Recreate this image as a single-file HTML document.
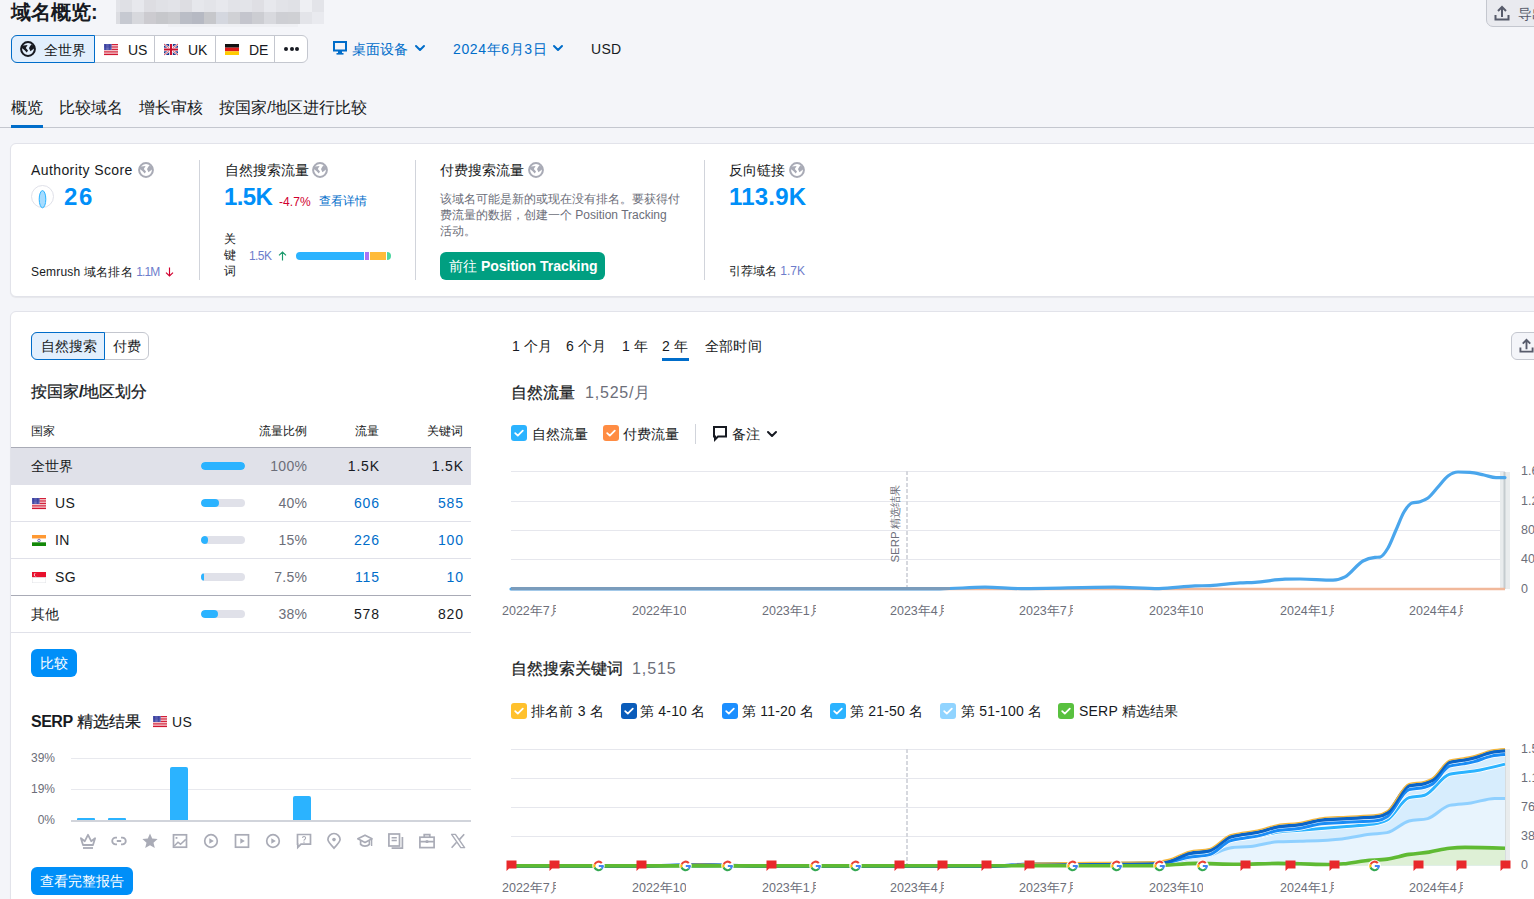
<!DOCTYPE html>
<html><head><meta charset="utf-8">
<style>
*{box-sizing:border-box;}
html,body{margin:0;padding:0;}
body{width:1534px;height:899px;overflow:hidden;background:#f4f5f9;position:relative;font-family:"Liberation Sans",sans-serif;color:#171a22;font-size:14px;}
.a{position:absolute;white-space:nowrap;}
.blk{position:absolute;}
svg{position:absolute;overflow:visible;}
</style></head><body>

<div class="a" style="left:11px;top:-1px;font-size:20px;line-height:26px;color:#171a22;font-weight:bold;">域名概览:</div>
<div class="blk" style="left:116px;top:0px;width:4px;height:12px;background:#e3e4e9"></div>
<div class="blk" style="left:116px;top:12px;width:4px;height:12px;background:#dcdde2"></div>
<div class="blk" style="left:120px;top:0px;width:12px;height:12px;background:#dfe0e5"></div>
<div class="blk" style="left:120px;top:12px;width:12px;height:12px;background:#c6c9d1"></div>
<div class="blk" style="left:132px;top:0px;width:12px;height:12px;background:#e7e8ed"></div>
<div class="blk" style="left:132px;top:12px;width:12px;height:12px;background:#d7d8dd"></div>
<div class="blk" style="left:144px;top:0px;width:12px;height:12px;background:#dddde2"></div>
<div class="blk" style="left:144px;top:12px;width:12px;height:12px;background:#cccbd0"></div>
<div class="blk" style="left:156px;top:0px;width:12px;height:12px;background:#e0e1e6"></div>
<div class="blk" style="left:156px;top:12px;width:12px;height:12px;background:#c6c7cb"></div>
<div class="blk" style="left:168px;top:0px;width:12px;height:12px;background:#e2e3e8"></div>
<div class="blk" style="left:168px;top:12px;width:12px;height:12px;background:#cacbcf"></div>
<div class="blk" style="left:180px;top:0px;width:12px;height:12px;background:#dddde2"></div>
<div class="blk" style="left:180px;top:12px;width:12px;height:12px;background:#babdc6"></div>
<div class="blk" style="left:192px;top:0px;width:12px;height:12px;background:#e6e7ec"></div>
<div class="blk" style="left:192px;top:12px;width:12px;height:12px;background:#b6b9c3"></div>
<div class="blk" style="left:204px;top:0px;width:12px;height:12px;background:#e3e4e9"></div>
<div class="blk" style="left:204px;top:12px;width:12px;height:12px;background:#c6c7cb"></div>
<div class="blk" style="left:216px;top:0px;width:12px;height:12px;background:#e7e8ed"></div>
<div class="blk" style="left:216px;top:12px;width:12px;height:12px;background:#d4d7df"></div>
<div class="blk" style="left:228px;top:0px;width:12px;height:12px;background:#e2e3e8"></div>
<div class="blk" style="left:228px;top:12px;width:12px;height:12px;background:#d0d1d5"></div>
<div class="blk" style="left:240px;top:0px;width:12px;height:12px;background:#e3e4e9"></div>
<div class="blk" style="left:240px;top:12px;width:12px;height:12px;background:#c4c5cd"></div>
<div class="blk" style="left:252px;top:0px;width:12px;height:12px;background:#dfdfe4"></div>
<div class="blk" style="left:252px;top:12px;width:12px;height:12px;background:#cccdd2"></div>
<div class="blk" style="left:264px;top:0px;width:12px;height:12px;background:#e7e8ed"></div>
<div class="blk" style="left:264px;top:12px;width:12px;height:12px;background:#d8d9de"></div>
<div class="blk" style="left:276px;top:0px;width:12px;height:12px;background:#e2e3e8"></div>
<div class="blk" style="left:276px;top:12px;width:12px;height:12px;background:#cecfd4"></div>
<div class="blk" style="left:288px;top:0px;width:12px;height:12px;background:#e0e1e6"></div>
<div class="blk" style="left:288px;top:12px;width:12px;height:12px;background:#cfd0d4"></div>
<div class="blk" style="left:300px;top:0px;width:12px;height:12px;background:#eeeff3"></div>
<div class="blk" style="left:300px;top:12px;width:12px;height:12px;background:#e3e4e9"></div>
<div class="blk" style="left:312px;top:0px;width:12px;height:12px;background:#e3e4e9"></div>
<div class="blk" style="left:312px;top:12px;width:12px;height:12px;background:#e9eaef"></div>
<div class="blk" style="left:168px;top:24px;width:130px;height:3px;background:#eff0f4"></div>
<div class="blk" style="left:1486px;top:-8px;width:90px;height:35px;background:#e9eaef;border:1px solid #c4c7cf;border-radius:7px;"></div>
<svg style="left:1494px;top:5px" width="16" height="16" viewBox="0 0 16 16"><path d="M8 12 V2.5 M4 6 L8 2 L12 6" fill="none" stroke="#575b6b" stroke-width="2" stroke-linejoin="miter"/><path d="M1.5 10 V14.5 H14.5 V10" fill="none" stroke="#575b6b" stroke-width="2"/></svg>
<div class="a" style="left:1518px;top:4px;font-size:14px;line-height:20px;color:#575b6b;font-weight:normal;">导出</div>
<div class="blk" style="left:11px;top:35px;width:297px;height:28px;border:1px solid #c4c7cf;border-radius:6px;background:#fff;"></div>
<div class="blk" style="left:154px;top:36px;width:1px;height:26px;background:#c4c7cf"></div>
<div class="blk" style="left:215px;top:36px;width:1px;height:26px;background:#c4c7cf"></div>
<div class="blk" style="left:274px;top:36px;width:1px;height:26px;background:#c4c7cf"></div>
<div class="blk" style="left:11px;top:35px;width:84px;height:28px;border:1px solid #006dca;border-radius:6px 0 0 6px;background:#e2effd;"></div>
<svg style="left:20px;top:41px" width="16" height="16" viewBox="0 0 16 16"><circle cx="8" cy="8" r="6.9" fill="none" stroke="#171a22" stroke-width="2"/><path d="M1.2 4.8 L7.6 4.1 L5.8 7 L8 9.6 L6.8 11.6 L4.4 8.9 L1.8 6.9 Z" fill="#171a22"/><path d="M11.4 3.3 L14.4 5.6 L14 7.4 L10.4 10.2 L9 7 L10.2 5.1 Z" fill="#171a22"/></svg>
<div class="a" style="left:44px;top:40px;font-size:14px;line-height:20px;color:#171a22;font-weight:normal;">全世界</div>
<svg style="left:104px;top:44px" width="14" height="11" viewBox="0 0 14 11"><rect width="14" height="11" fill="#fff"/><rect x="0" y="0.00" width="14" height="0.95" fill="#d0142e"/><rect x="0" y="1.69" width="14" height="0.95" fill="#d0142e"/><rect x="0" y="3.38" width="14" height="0.95" fill="#d0142e"/><rect x="0" y="5.07" width="14" height="0.95" fill="#d0142e"/><rect x="0" y="6.76" width="14" height="0.95" fill="#d0142e"/><rect x="0" y="8.45" width="14" height="0.95" fill="#d0142e"/><rect x="0" y="10.14" width="14" height="0.95" fill="#d0142e"/><rect x="0" y="10.1" width="14" height="0.9" fill="#d0142e"/><rect x="0" y="0" width="7.6" height="6" fill="#2f3599"/><circle cx="0.90" cy="0.80" r="0.38" fill="#c9ccf0"/><circle cx="2.20" cy="0.80" r="0.38" fill="#c9ccf0"/><circle cx="3.50" cy="0.80" r="0.38" fill="#c9ccf0"/><circle cx="4.80" cy="0.80" r="0.38" fill="#c9ccf0"/><circle cx="6.10" cy="0.80" r="0.38" fill="#c9ccf0"/><circle cx="7.40" cy="0.80" r="0.38" fill="#c9ccf0"/><circle cx="0.90" cy="1.95" r="0.38" fill="#c9ccf0"/><circle cx="2.20" cy="1.95" r="0.38" fill="#c9ccf0"/><circle cx="3.50" cy="1.95" r="0.38" fill="#c9ccf0"/><circle cx="4.80" cy="1.95" r="0.38" fill="#c9ccf0"/><circle cx="6.10" cy="1.95" r="0.38" fill="#c9ccf0"/><circle cx="7.40" cy="1.95" r="0.38" fill="#c9ccf0"/><circle cx="0.90" cy="3.10" r="0.38" fill="#c9ccf0"/><circle cx="2.20" cy="3.10" r="0.38" fill="#c9ccf0"/><circle cx="3.50" cy="3.10" r="0.38" fill="#c9ccf0"/><circle cx="4.80" cy="3.10" r="0.38" fill="#c9ccf0"/><circle cx="6.10" cy="3.10" r="0.38" fill="#c9ccf0"/><circle cx="7.40" cy="3.10" r="0.38" fill="#c9ccf0"/><circle cx="0.90" cy="4.25" r="0.38" fill="#c9ccf0"/><circle cx="2.20" cy="4.25" r="0.38" fill="#c9ccf0"/><circle cx="3.50" cy="4.25" r="0.38" fill="#c9ccf0"/><circle cx="4.80" cy="4.25" r="0.38" fill="#c9ccf0"/><circle cx="6.10" cy="4.25" r="0.38" fill="#c9ccf0"/><circle cx="7.40" cy="4.25" r="0.38" fill="#c9ccf0"/><circle cx="0.90" cy="5.40" r="0.38" fill="#c9ccf0"/><circle cx="2.20" cy="5.40" r="0.38" fill="#c9ccf0"/><circle cx="3.50" cy="5.40" r="0.38" fill="#c9ccf0"/><circle cx="4.80" cy="5.40" r="0.38" fill="#c9ccf0"/><circle cx="6.10" cy="5.40" r="0.38" fill="#c9ccf0"/><circle cx="7.40" cy="5.40" r="0.38" fill="#c9ccf0"/></svg>
<div class="a" style="left:128px;top:40px;font-size:14px;line-height:20px;color:#171a22;font-weight:normal;">US</div>
<svg style="left:164px;top:44px" width="14" height="11" viewBox="0 0 14 11"><rect width="14" height="11" fill="#1f3c8f"/><path d="M0 0 L14 11 M14 0 L0 11" stroke="#fff" stroke-width="2.2"/><path d="M0 0 L14 11 M14 0 L0 11" stroke="#c8102e" stroke-width="0.8"/><rect x="5.2" y="0" width="3.6" height="11" fill="#fff"/><rect x="0" y="3.7" width="14" height="3.6" fill="#fff"/><rect x="6" y="0" width="2" height="11" fill="#c8102e"/><rect x="0" y="4.5" width="14" height="2" fill="#c8102e"/></svg>
<div class="a" style="left:188px;top:40px;font-size:14px;line-height:20px;color:#171a22;font-weight:normal;">UK</div>
<svg style="left:225px;top:44px" width="14" height="11" viewBox="0 0 14 11"><rect width="14" height="3.67" fill="#111"/><rect y="3.67" width="14" height="3.67" fill="#dd1c1c"/><rect y="7.33" width="14" height="3.67" fill="#ffcc00"/></svg>
<div class="a" style="left:249px;top:40px;font-size:14px;line-height:20px;color:#171a22;font-weight:normal;">DE</div>
<div class="blk" style="left:284.0px;top:46.5px;width:4px;height:4px;background:#171a22;border-radius:50%"></div>
<div class="blk" style="left:289.6px;top:46.5px;width:4px;height:4px;background:#171a22;border-radius:50%"></div>
<div class="blk" style="left:295.2px;top:46.5px;width:4px;height:4px;background:#171a22;border-radius:50%"></div>
<svg style="left:333px;top:41px" width="14" height="14" viewBox="0 0 14 14"><rect x="1" y="1" width="12" height="8.5" fill="none" stroke="#006dca" stroke-width="2"/><rect x="5" y="10" width="4" height="2" fill="#006dca"/><rect x="3.5" y="12" width="7" height="1.6" fill="#006dca"/></svg>
<div class="a" style="left:352px;top:39px;font-size:14px;line-height:20px;color:#006dca;font-weight:normal;">桌面设备</div>
<svg style="left:415px;top:45px" width="10" height="6" viewBox="0 0 10 6"><path d="M1 1 L5 5 L9 1" fill="none" stroke="#006dca" stroke-width="2" stroke-linecap="round" stroke-linejoin="round"/></svg>
<div class="a" style="left:453px;top:39px;font-size:14px;line-height:20px;color:#006dca;font-weight:normal;letter-spacing:0.6px">2024年6月3日</div>
<svg style="left:553px;top:45px" width="10" height="6" viewBox="0 0 10 6"><path d="M1 1 L5 5 L9 1" fill="none" stroke="#006dca" stroke-width="2" stroke-linecap="round" stroke-linejoin="round"/></svg>
<div class="a" style="left:591px;top:39px;font-size:14px;line-height:20px;color:#171a22;font-weight:normal;letter-spacing:0.3px">USD</div>
<div class="blk" style="left:0px;top:127px;width:1534px;height:1px;background:#c4c7cf"></div>
<div class="a" style="left:11px;top:97px;font-size:16px;line-height:22px;color:#171a22;font-weight:normal;">概览</div>
<div class="blk" style="left:11px;top:125px;width:32px;height:3px;background:#006dca"></div>
<div class="a" style="left:59px;top:97px;font-size:16px;line-height:22px;color:#171a22;font-weight:normal;">比较域名</div>
<div class="a" style="left:139px;top:97px;font-size:16px;line-height:22px;color:#171a22;font-weight:normal;">增长审核</div>
<div class="a" style="left:219px;top:97px;font-size:16px;line-height:22px;color:#171a22;font-weight:normal;">按国家/地区进行比较</div>
<div class="blk" style="left:10px;top:143px;width:1541px;height:154px;background:#fff;border:1px solid #e2e3ea;border-radius:6px;box-shadow:0 1px 1px rgba(0,0,0,.06)"></div>
<div class="blk" style="left:199px;top:160px;width:1px;height:120px;background:#d1d4db"></div>
<div class="blk" style="left:415px;top:160px;width:1px;height:120px;background:#d1d4db"></div>
<div class="blk" style="left:704px;top:160px;width:1px;height:120px;background:#d1d4db"></div>
<div class="a" style="left:31px;top:160px;font-size:14px;line-height:20px;color:#171a22;font-weight:normal;letter-spacing:0.4px">Authority Score</div>
<svg style="left:138px;top:162px" width="16" height="16" viewBox="0 0 16 16"><circle cx="8" cy="8" r="6.9" fill="none" stroke="#a9abb6" stroke-width="2"/><path d="M1.2 4.8 L7.6 4.1 L5.8 7 L8 9.6 L6.8 11.6 L4.4 8.9 L1.8 6.9 Z" fill="#a9abb6"/><path d="M11.4 3.3 L14.4 5.6 L14 7.4 L10.4 10.2 L9 7 L10.2 5.1 Z" fill="#a9abb6"/></svg>
<svg style="left:31px;top:185px" width="24" height="24" viewBox="0 0 24 24"><circle cx="11.5" cy="11.5" r="11" fill="none" stroke="#e0e1e9" stroke-width="1"/><ellipse cx="11.5" cy="14.2" rx="3.3" ry="8.6" fill="#a6dcff" stroke="#2bb3ff" stroke-width="1"/></svg>
<div class="a" style="left:64px;top:182px;font-size:24px;line-height:30px;color:#008ff8;font-weight:bold;letter-spacing:1.6px">26</div>
<div class="a" style="left:31px;top:262px;font-size:12px;line-height:20px;color:#171a22;font-weight:normal;letter-spacing:0.2px">Semrush 域名排名 <span style="color:#6d7ccb;letter-spacing:-0.9px">1.1M</span></div>
<svg style="left:165px;top:267px" width="9" height="10" viewBox="0 0 9 10"><path d="M4.5 0.5 V9 M1 5.6 L4.5 9 L8 5.6" fill="none" stroke="#d1002f" stroke-width="1.15"/></svg>
<div class="a" style="left:225px;top:160px;font-size:14px;line-height:20px;color:#171a22;font-weight:normal;">自然搜索流量</div>
<svg style="left:312px;top:162px" width="16" height="16" viewBox="0 0 16 16"><circle cx="8" cy="8" r="6.9" fill="none" stroke="#a9abb6" stroke-width="2"/><path d="M1.2 4.8 L7.6 4.1 L5.8 7 L8 9.6 L6.8 11.6 L4.4 8.9 L1.8 6.9 Z" fill="#a9abb6"/><path d="M11.4 3.3 L14.4 5.6 L14 7.4 L10.4 10.2 L9 7 L10.2 5.1 Z" fill="#a9abb6"/></svg>
<div class="a" style="left:224px;top:182px;font-size:24px;line-height:30px;color:#008ff8;font-weight:bold;letter-spacing:-0.6px">1.5K</div>
<div class="a" style="left:279px;top:192px;font-size:12px;line-height:20px;color:#d1002f;font-weight:normal;letter-spacing:0.1px">-4.7%</div>
<div class="a" style="left:319px;top:191px;font-size:12px;line-height:20px;color:#006dca;font-weight:normal;">查看详情</div>
<div class="a" style="left:224px;top:231px;font-size:12px;line-height:16px;white-space:normal;width:14px;">关<br>键<br>词</div>
<div class="a" style="left:249px;top:246px;font-size:12px;line-height:20px;color:#6d7ccb;font-weight:normal;letter-spacing:-0.6px">1.5K</div>
<svg style="left:278px;top:251px" width="9" height="10" viewBox="0 0 9 10"><path d="M4.5 9.5 V1 M1 4.4 L4.5 1 L8 4.4" fill="none" stroke="#1b9a6c" stroke-width="1.15"/></svg>
<div class="blk" style="left:296px;top:252px;width:95px;height:8px;border-radius:4px;overflow:hidden;background:#fff"><div class="blk" style="left:0;top:0;width:68px;height:8px;background:#2bb3ff"></div><div class="blk" style="left:69px;top:0;width:4px;height:8px;background:#a972f6"></div><div class="blk" style="left:74px;top:0;width:16px;height:8px;background:#ffbb3a"></div><div class="blk" style="left:91px;top:0;width:4px;height:8px;background:#4ed6a0"></div></div>
<div class="a" style="left:440px;top:160px;font-size:14px;line-height:20px;color:#171a22;font-weight:normal;">付费搜索流量</div>
<svg style="left:528px;top:162px" width="16" height="16" viewBox="0 0 16 16"><circle cx="8" cy="8" r="6.9" fill="none" stroke="#a9abb6" stroke-width="2"/><path d="M1.2 4.8 L7.6 4.1 L5.8 7 L8 9.6 L6.8 11.6 L4.4 8.9 L1.8 6.9 Z" fill="#a9abb6"/><path d="M11.4 3.3 L14.4 5.6 L14 7.4 L10.4 10.2 L9 7 L10.2 5.1 Z" fill="#a9abb6"/></svg>
<div class="a" style="left:440px;top:191px;width:245px;font-size:12px;line-height:16px;color:#6c6e79;white-space:normal;">该域名可能是新的或现在没有排名。要获得付<br>费流量的数据，创建一个 Position Tracking<br>活动。</div>
<div class="blk" style="left:440px;top:252px;width:165px;height:28px;background:#009f81;border-radius:6px"></div>
<div class="a" style="left:449px;top:256px;font-size:14px;line-height:20px;color:#fff;font-weight:bold;"><span style="font-weight:500">前往</span> Position Tracking</div>
<div class="a" style="left:729px;top:160px;font-size:14px;line-height:20px;color:#171a22;font-weight:normal;">反向链接</div>
<svg style="left:789px;top:162px" width="16" height="16" viewBox="0 0 16 16"><circle cx="8" cy="8" r="6.9" fill="none" stroke="#a9abb6" stroke-width="2"/><path d="M1.2 4.8 L7.6 4.1 L5.8 7 L8 9.6 L6.8 11.6 L4.4 8.9 L1.8 6.9 Z" fill="#a9abb6"/><path d="M11.4 3.3 L14.4 5.6 L14 7.4 L10.4 10.2 L9 7 L10.2 5.1 Z" fill="#a9abb6"/></svg>
<div class="a" style="left:729px;top:182px;font-size:24px;line-height:30px;color:#008ff8;font-weight:bold;letter-spacing:0.2px">113.9K</div>
<div class="a" style="left:729px;top:261px;font-size:12px;line-height:20px;color:#171a22;font-weight:normal;">引荐域名 <span style="color:#6d7ccb">1.7K</span></div>
<div class="blk" style="left:10px;top:311px;width:1541px;height:640px;background:#fff;border:1px solid #e2e3ea;border-radius:6px;box-shadow:0 1px 1px rgba(0,0,0,.06)"></div>
<div class="blk" style="left:31px;top:332px;width:118px;height:28px;border:1px solid #c4c7cf;border-radius:6px;background:#fff"></div>
<div class="blk" style="left:31px;top:332px;width:74px;height:28px;border:1px solid #006dca;border-radius:6px 0 0 6px;background:#e2effd"></div>
<div class="a" style="left:41px;top:336px;font-size:14px;line-height:20px;color:#171a22;font-weight:normal;">自然搜索</div>
<div class="a" style="left:113px;top:336px;font-size:14px;line-height:20px;color:#171a22;font-weight:normal;">付费</div>
<div class="a" style="left:31px;top:381px;font-size:16px;line-height:22px;color:#171a22;font-weight:500;-webkit-text-stroke:0.25px #171a22">按国家<span style="font-weight:bold">/</span>地区划分</div>
<div class="a" style="left:31px;top:421px;font-size:12px;line-height:20px;color:#171a22;font-weight:normal;">国家</div>
<div class="a" style="right:1227px;top:421px;font-size:12px;line-height:20px;color:#171a22;font-weight:normal;text-align:right;">流量比例</div>
<div class="a" style="right:1155px;top:421px;font-size:12px;line-height:20px;color:#171a22;font-weight:normal;text-align:right;">流量</div>
<div class="a" style="right:1071px;top:421px;font-size:12px;line-height:20px;color:#171a22;font-weight:normal;text-align:right;">关键词</div>
<div class="blk" style="left:11px;top:448px;width:460px;height:36px;background:#e0e1e9"></div>
<div class="blk" style="left:11px;top:447px;width:460px;height:1px;background:#a9abb6"></div>
<div class="a" style="left:31px;top:456px;font-size:14px;line-height:20px;color:#171a22;font-weight:normal;">全世界</div>
<div class="blk" style="left:201px;top:462px;width:44px;height:8px;border-radius:4px;background:#e0e1e9;overflow:hidden"><div class="blk" style="left:0;top:0;width:44.0px;height:8px;border-radius:4px;background:#2bb3ff"></div></div>
<div class="a" style="right:1227px;top:456px;font-size:14px;line-height:20px;color:#6c6e79;font-weight:normal;text-align:right;letter-spacing:0.3px;margin-right:-0.3px">100%</div>
<div class="a" style="right:1155px;top:456px;font-size:14px;line-height:20px;color:#171a22;font-weight:normal;text-align:right;letter-spacing:0.8px;margin-right:-0.8px">1.5K</div>
<div class="a" style="right:1071px;top:456px;font-size:14px;line-height:20px;color:#171a22;font-weight:normal;text-align:right;letter-spacing:0.8px;margin-right:-0.8px">1.5K</div>
<div class="blk" style="left:11px;top:484px;width:460px;height:1px;background:#e0e1e9"></div>
<svg style="left:32px;top:498px" width="14" height="11" viewBox="0 0 14 11"><rect width="14" height="11" fill="#fff"/><rect x="0" y="0.00" width="14" height="0.95" fill="#d0142e"/><rect x="0" y="1.69" width="14" height="0.95" fill="#d0142e"/><rect x="0" y="3.38" width="14" height="0.95" fill="#d0142e"/><rect x="0" y="5.07" width="14" height="0.95" fill="#d0142e"/><rect x="0" y="6.76" width="14" height="0.95" fill="#d0142e"/><rect x="0" y="8.45" width="14" height="0.95" fill="#d0142e"/><rect x="0" y="10.14" width="14" height="0.95" fill="#d0142e"/><rect x="0" y="10.1" width="14" height="0.9" fill="#d0142e"/><rect x="0" y="0" width="7.6" height="6" fill="#2f3599"/><circle cx="0.90" cy="0.80" r="0.38" fill="#c9ccf0"/><circle cx="2.20" cy="0.80" r="0.38" fill="#c9ccf0"/><circle cx="3.50" cy="0.80" r="0.38" fill="#c9ccf0"/><circle cx="4.80" cy="0.80" r="0.38" fill="#c9ccf0"/><circle cx="6.10" cy="0.80" r="0.38" fill="#c9ccf0"/><circle cx="7.40" cy="0.80" r="0.38" fill="#c9ccf0"/><circle cx="0.90" cy="1.95" r="0.38" fill="#c9ccf0"/><circle cx="2.20" cy="1.95" r="0.38" fill="#c9ccf0"/><circle cx="3.50" cy="1.95" r="0.38" fill="#c9ccf0"/><circle cx="4.80" cy="1.95" r="0.38" fill="#c9ccf0"/><circle cx="6.10" cy="1.95" r="0.38" fill="#c9ccf0"/><circle cx="7.40" cy="1.95" r="0.38" fill="#c9ccf0"/><circle cx="0.90" cy="3.10" r="0.38" fill="#c9ccf0"/><circle cx="2.20" cy="3.10" r="0.38" fill="#c9ccf0"/><circle cx="3.50" cy="3.10" r="0.38" fill="#c9ccf0"/><circle cx="4.80" cy="3.10" r="0.38" fill="#c9ccf0"/><circle cx="6.10" cy="3.10" r="0.38" fill="#c9ccf0"/><circle cx="7.40" cy="3.10" r="0.38" fill="#c9ccf0"/><circle cx="0.90" cy="4.25" r="0.38" fill="#c9ccf0"/><circle cx="2.20" cy="4.25" r="0.38" fill="#c9ccf0"/><circle cx="3.50" cy="4.25" r="0.38" fill="#c9ccf0"/><circle cx="4.80" cy="4.25" r="0.38" fill="#c9ccf0"/><circle cx="6.10" cy="4.25" r="0.38" fill="#c9ccf0"/><circle cx="7.40" cy="4.25" r="0.38" fill="#c9ccf0"/><circle cx="0.90" cy="5.40" r="0.38" fill="#c9ccf0"/><circle cx="2.20" cy="5.40" r="0.38" fill="#c9ccf0"/><circle cx="3.50" cy="5.40" r="0.38" fill="#c9ccf0"/><circle cx="4.80" cy="5.40" r="0.38" fill="#c9ccf0"/><circle cx="6.10" cy="5.40" r="0.38" fill="#c9ccf0"/><circle cx="7.40" cy="5.40" r="0.38" fill="#c9ccf0"/></svg>
<div class="a" style="left:55px;top:493px;font-size:14px;line-height:20px;color:#171a22;font-weight:normal;letter-spacing:0.3px">US</div>
<div class="blk" style="left:201px;top:499px;width:44px;height:8px;border-radius:4px;background:#e0e1e9;overflow:hidden"><div class="blk" style="left:0;top:0;width:17.6px;height:8px;border-radius:4px;background:#2bb3ff"></div></div>
<div class="a" style="right:1227px;top:493px;font-size:14px;line-height:20px;color:#6c6e79;font-weight:normal;text-align:right;letter-spacing:0.3px;margin-right:-0.3px">40%</div>
<div class="a" style="right:1155px;top:493px;font-size:14px;line-height:20px;color:#006dca;font-weight:normal;text-align:right;letter-spacing:0.8px;margin-right:-0.8px">606</div>
<div class="a" style="right:1071px;top:493px;font-size:14px;line-height:20px;color:#006dca;font-weight:normal;text-align:right;letter-spacing:0.8px;margin-right:-0.8px">585</div>
<div class="blk" style="left:11px;top:521px;width:460px;height:1px;background:#e0e1e9"></div>
<svg style="left:32px;top:535px" width="14" height="11" viewBox="0 0 14 11"><rect width="14" height="3.67" fill="#ff9933"/><rect y="3.67" width="14" height="3.67" fill="#fff"/><rect y="7.33" width="14" height="3.67" fill="#138808"/><circle cx="7" cy="5.5" r="1.3" fill="none" stroke="#000080" stroke-width="0.5"/></svg>
<div class="a" style="left:55px;top:530px;font-size:14px;line-height:20px;color:#171a22;font-weight:normal;letter-spacing:0.3px">IN</div>
<div class="blk" style="left:201px;top:536px;width:44px;height:8px;border-radius:4px;background:#e0e1e9;overflow:hidden"><div class="blk" style="left:0;top:0;width:6.6px;height:8px;border-radius:4px;background:#2bb3ff"></div></div>
<div class="a" style="right:1227px;top:530px;font-size:14px;line-height:20px;color:#6c6e79;font-weight:normal;text-align:right;letter-spacing:0.3px;margin-right:-0.3px">15%</div>
<div class="a" style="right:1155px;top:530px;font-size:14px;line-height:20px;color:#006dca;font-weight:normal;text-align:right;letter-spacing:0.8px;margin-right:-0.8px">226</div>
<div class="a" style="right:1071px;top:530px;font-size:14px;line-height:20px;color:#006dca;font-weight:normal;text-align:right;letter-spacing:0.8px;margin-right:-0.8px">100</div>
<div class="blk" style="left:11px;top:558px;width:460px;height:1px;background:#e0e1e9"></div>
<svg style="left:32px;top:572px" width="14" height="11" viewBox="0 0 14 11"><rect width="14" height="5.5" fill="#e8112d"/><rect y="5.5" width="14" height="5.5" fill="#fff"/><rect x="0.25" y="5.5" width="13.5" height="5.25" fill="none" stroke="#e1e2e6" stroke-width="0.5"/><circle cx="3.6" cy="2.8" r="1.8" fill="#fff"/><circle cx="4.3" cy="2.8" r="1.7" fill="#e8112d"/></svg>
<div class="a" style="left:55px;top:567px;font-size:14px;line-height:20px;color:#171a22;font-weight:normal;letter-spacing:0.3px">SG</div>
<div class="blk" style="left:201px;top:573px;width:44px;height:8px;border-radius:4px;background:#e0e1e9;overflow:hidden"><div class="blk" style="left:0;top:0;width:3.3px;height:8px;border-radius:4px;background:#2bb3ff"></div></div>
<div class="a" style="right:1227px;top:567px;font-size:14px;line-height:20px;color:#6c6e79;font-weight:normal;text-align:right;letter-spacing:0.3px;margin-right:-0.3px">7.5%</div>
<div class="a" style="right:1155px;top:567px;font-size:14px;line-height:20px;color:#006dca;font-weight:normal;text-align:right;letter-spacing:0.8px;margin-right:-0.8px">115</div>
<div class="a" style="right:1071px;top:567px;font-size:14px;line-height:20px;color:#006dca;font-weight:normal;text-align:right;letter-spacing:0.8px;margin-right:-0.8px">10</div>
<div class="blk" style="left:11px;top:595px;width:460px;height:1px;background:#a9abb6"></div>
<div class="a" style="left:31px;top:604px;font-size:14px;line-height:20px;color:#171a22;font-weight:normal;">其他</div>
<div class="blk" style="left:201px;top:610px;width:44px;height:8px;border-radius:4px;background:#e0e1e9;overflow:hidden"><div class="blk" style="left:0;top:0;width:16.7px;height:8px;border-radius:4px;background:#2bb3ff"></div></div>
<div class="a" style="right:1227px;top:604px;font-size:14px;line-height:20px;color:#6c6e79;font-weight:normal;text-align:right;letter-spacing:0.3px;margin-right:-0.3px">38%</div>
<div class="a" style="right:1155px;top:604px;font-size:14px;line-height:20px;color:#171a22;font-weight:normal;text-align:right;letter-spacing:0.8px;margin-right:-0.8px">578</div>
<div class="a" style="right:1071px;top:604px;font-size:14px;line-height:20px;color:#171a22;font-weight:normal;text-align:right;letter-spacing:0.8px;margin-right:-0.8px">820</div>
<div class="blk" style="left:11px;top:632px;width:460px;height:1px;background:#e0e1e9"></div>
<div class="blk" style="left:31px;top:649px;width:46px;height:28px;background:#008ff8;border-radius:6px"></div>
<div class="a" style="left:40px;top:653px;font-size:14px;line-height:20px;color:#fff;font-weight:500;">比较</div>
<div class="a" style="left:31px;top:711px;font-size:16px;line-height:22px;color:#171a22;font-weight:500;"><span style="font-weight:bold;letter-spacing:-0.5px">SERP</span> <span style="-webkit-text-stroke:0.25px #171a22">精选结果</span></div>
<svg style="left:153px;top:716px" width="14" height="11" viewBox="0 0 14 11"><rect width="14" height="11" fill="#fff"/><rect x="0" y="0.00" width="14" height="0.95" fill="#d0142e"/><rect x="0" y="1.69" width="14" height="0.95" fill="#d0142e"/><rect x="0" y="3.38" width="14" height="0.95" fill="#d0142e"/><rect x="0" y="5.07" width="14" height="0.95" fill="#d0142e"/><rect x="0" y="6.76" width="14" height="0.95" fill="#d0142e"/><rect x="0" y="8.45" width="14" height="0.95" fill="#d0142e"/><rect x="0" y="10.14" width="14" height="0.95" fill="#d0142e"/><rect x="0" y="10.1" width="14" height="0.9" fill="#d0142e"/><rect x="0" y="0" width="7.6" height="6" fill="#2f3599"/><circle cx="0.90" cy="0.80" r="0.38" fill="#c9ccf0"/><circle cx="2.20" cy="0.80" r="0.38" fill="#c9ccf0"/><circle cx="3.50" cy="0.80" r="0.38" fill="#c9ccf0"/><circle cx="4.80" cy="0.80" r="0.38" fill="#c9ccf0"/><circle cx="6.10" cy="0.80" r="0.38" fill="#c9ccf0"/><circle cx="7.40" cy="0.80" r="0.38" fill="#c9ccf0"/><circle cx="0.90" cy="1.95" r="0.38" fill="#c9ccf0"/><circle cx="2.20" cy="1.95" r="0.38" fill="#c9ccf0"/><circle cx="3.50" cy="1.95" r="0.38" fill="#c9ccf0"/><circle cx="4.80" cy="1.95" r="0.38" fill="#c9ccf0"/><circle cx="6.10" cy="1.95" r="0.38" fill="#c9ccf0"/><circle cx="7.40" cy="1.95" r="0.38" fill="#c9ccf0"/><circle cx="0.90" cy="3.10" r="0.38" fill="#c9ccf0"/><circle cx="2.20" cy="3.10" r="0.38" fill="#c9ccf0"/><circle cx="3.50" cy="3.10" r="0.38" fill="#c9ccf0"/><circle cx="4.80" cy="3.10" r="0.38" fill="#c9ccf0"/><circle cx="6.10" cy="3.10" r="0.38" fill="#c9ccf0"/><circle cx="7.40" cy="3.10" r="0.38" fill="#c9ccf0"/><circle cx="0.90" cy="4.25" r="0.38" fill="#c9ccf0"/><circle cx="2.20" cy="4.25" r="0.38" fill="#c9ccf0"/><circle cx="3.50" cy="4.25" r="0.38" fill="#c9ccf0"/><circle cx="4.80" cy="4.25" r="0.38" fill="#c9ccf0"/><circle cx="6.10" cy="4.25" r="0.38" fill="#c9ccf0"/><circle cx="7.40" cy="4.25" r="0.38" fill="#c9ccf0"/><circle cx="0.90" cy="5.40" r="0.38" fill="#c9ccf0"/><circle cx="2.20" cy="5.40" r="0.38" fill="#c9ccf0"/><circle cx="3.50" cy="5.40" r="0.38" fill="#c9ccf0"/><circle cx="4.80" cy="5.40" r="0.38" fill="#c9ccf0"/><circle cx="6.10" cy="5.40" r="0.38" fill="#c9ccf0"/><circle cx="7.40" cy="5.40" r="0.38" fill="#c9ccf0"/></svg>
<div class="a" style="left:172px;top:711px;font-size:14px;line-height:22px;color:#171a22;font-weight:normal;letter-spacing:0.3px">US</div>
<div class="a" style="right:1479px;top:748px;font-size:12px;line-height:20px;color:#6c6e79;font-weight:normal;text-align:right;">39%</div>
<div class="a" style="right:1479px;top:779px;font-size:12px;line-height:20px;color:#6c6e79;font-weight:normal;text-align:right;">19%</div>
<div class="a" style="right:1479px;top:810px;font-size:12px;line-height:20px;color:#6c6e79;font-weight:normal;text-align:right;">0%</div>
<div class="blk" style="left:71px;top:758px;width:400px;height:1px;background:#e8e9ee"></div>
<div class="blk" style="left:71px;top:789px;width:400px;height:1px;background:#e8e9ee"></div>
<div class="blk" style="left:71px;top:820px;width:400px;height:2px;background:#d1d4db"></div>
<div class="blk" style="left:77px;top:818px;width:18px;height:2px;background:#2bb3ff;border-radius:1px 1px 0 0"></div>
<div class="blk" style="left:108px;top:818px;width:18px;height:2px;background:#2bb3ff;border-radius:1px 1px 0 0"></div>
<div class="blk" style="left:170px;top:767px;width:18px;height:53px;background:#2bb3ff;border-radius:2px 2px 0 0"></div>
<div class="blk" style="left:293px;top:796px;width:18px;height:24px;background:#2bb3ff;border-radius:2px 2px 0 0"></div>
<svg style="left:80.0px;top:833px" width="16" height="16" viewBox="0 0 16 16"><path d="M0.9 5.2 L4.8 8.2 L8 1.8 L11.2 8.2 L15.1 5.2 L13 12 H3 Z" fill="none" stroke="#a9abb6" stroke-width="1.8" stroke-linejoin="round"/><path d="M3 15 H13" stroke="#a9abb6" stroke-width="1.8"/></svg>
<svg style="left:110.8px;top:833px" width="16" height="16" viewBox="0 0 16 16"><path d="M6 4.6 H4.6 A3.4 3.4 0 0 0 4.6 11.4 H6 M10 4.6 H11.4 A3.4 3.4 0 0 1 11.4 11.4 H10 M5.8 8 H10.2" fill="none" stroke="#a9abb6" stroke-width="1.8"/></svg>
<svg style="left:141.6px;top:833px" width="16" height="16" viewBox="0 0 16 16"><path d="M8 0.6 L10.2 5.6 L15.6 6.1 L11.5 9.7 L12.8 15.1 L8 12.3 L3.2 15.1 L4.5 9.7 L0.4 6.1 L5.8 5.6 Z" fill="#a9abb6"/></svg>
<svg style="left:172.4px;top:833px" width="16" height="16" viewBox="0 0 16 16"><rect x="1.5" y="1.8" width="13" height="12.4" fill="none" stroke="#a9abb6" stroke-width="1.7"/><path d="M2.2 13 L6 9.2 L8.5 11.2 L13.8 6.4" fill="none" stroke="#a9abb6" stroke-width="1.5"/><rect x="3.6" y="4" width="1.8" height="1.8" fill="#a9abb6"/></svg>
<svg style="left:203.2px;top:833px" width="16" height="16" viewBox="0 0 16 16"><circle cx="8" cy="8" r="6.3" fill="none" stroke="#a9abb6" stroke-width="1.7"/><path d="M6.3 5.2 L10.8 8 L6.3 10.8 Z" fill="#a9abb6"/></svg>
<svg style="left:234.0px;top:833px" width="16" height="16" viewBox="0 0 16 16"><rect x="1.5" y="1.8" width="13" height="12.4" fill="none" stroke="#a9abb6" stroke-width="1.7"/><path d="M6.3 5.2 L10.8 8 L6.3 10.8 Z" fill="#a9abb6"/></svg>
<svg style="left:264.8px;top:833px" width="16" height="16" viewBox="0 0 16 16"><circle cx="8" cy="8" r="6.3" fill="none" stroke="#a9abb6" stroke-width="1.7"/><path d="M6.3 5.2 L10.8 8 L6.3 10.8 Z" fill="#a9abb6"/></svg>
<svg style="left:295.6px;top:833px" width="16" height="16" viewBox="0 0 16 16"><path d="M1.5 1.5 H14.5 V11.2 H5 L1.8 14.4 V11.2 H1.5 Z" fill="none" stroke="#a9abb6" stroke-width="1.7" stroke-linejoin="miter"/><path d="M6.6 5 A1.5 1.5 0 1 1 8.6 6.4 Q8 6.8 8 7.8" fill="none" stroke="#a9abb6" stroke-width="1.1"/><rect x="7.4" y="8.6" width="1.2" height="1.2" fill="#a9abb6"/></svg>
<svg style="left:326.4px;top:833px" width="16" height="16" viewBox="0 0 16 16"><path d="M8 15.2 C4 11 1.9 8.6 1.9 6.6 A6.1 6.1 0 0 1 14.1 6.6 C14.1 8.6 12 11 8 15.2 Z" fill="none" stroke="#a9abb6" stroke-width="1.7"/><circle cx="8" cy="6.6" r="1.8" fill="#a9abb6"/></svg>
<svg style="left:357.2px;top:833px" width="16" height="16" viewBox="0 0 16 16"><path d="M0.8 5.8 L8 2.2 L15 5.8 L8 9.4 Z" fill="none" stroke="#a9abb6" stroke-width="1.7" stroke-linejoin="round"/><path d="M3.6 7.4 V11.4 C5.6 13.6 10.4 13.6 12.4 11.4 V7.4" fill="none" stroke="#a9abb6" stroke-width="1.7"/><path d="M14.6 6 V13" stroke="#a9abb6" stroke-width="1.4"/></svg>
<svg style="left:388.0px;top:833px" width="16" height="16" viewBox="0 0 16 16"><rect x="0.9" y="1" width="10.6" height="12" fill="none" stroke="#a9abb6" stroke-width="1.7"/><path d="M3.6 4.8 H8.8 M3.6 7.6 H8.8" stroke="#a9abb6" stroke-width="1.5"/><path d="M14.4 4 V15.2 H3.6" fill="none" stroke="#a9abb6" stroke-width="1.7"/></svg>
<svg style="left:418.8px;top:833px" width="16" height="16" viewBox="0 0 16 16"><rect x="0.9" y="4.2" width="14.2" height="10.4" fill="none" stroke="#a9abb6" stroke-width="1.7"/><path d="M5.2 4.2 V1.6 H10.8 V4.2 M1 8.6 H15" fill="none" stroke="#a9abb6" stroke-width="1.7"/><rect x="6.6" y="7.3" width="2.8" height="2.6" rx="0.6" fill="#a9abb6"/></svg>
<svg style="left:449.6px;top:833px" width="16" height="16" viewBox="0 0 16 16"><path d="M1.6 1.4 H5.4 L14.6 14.6 H10.8 Z" fill="none" stroke="#a9abb6" stroke-width="1.4" stroke-linejoin="round"/><path d="M14.2 1.2 L9.4 6.6 M1.6 14.8 L6.6 9.2" stroke="#a9abb6" stroke-width="1.6"/></svg>
<div class="blk" style="left:31px;top:867px;width:102px;height:28px;background:#008ff8;border-radius:6px"></div>
<div class="a" style="left:40px;top:871px;font-size:14px;line-height:20px;color:#fff;font-weight:500;">查看完整报告</div>
<div class="blk" style="left:1511px;top:332px;width:40px;height:28px;background:#f4f5f9;border:1px solid #c4c7cf;border-radius:6px"></div>
<svg style="left:1519px;top:338px" width="15" height="15" viewBox="0 0 16 16"><path d="M8 12 V2.5 M4 6 L8 2 L12 6" fill="none" stroke="#575b6b" stroke-width="2" stroke-linejoin="miter"/><path d="M1.5 10 V14.5 H14.5 V10" fill="none" stroke="#575b6b" stroke-width="2"/></svg>
<div class="a" style="left:512px;top:336px;font-size:14px;line-height:20px;color:#171a22;font-weight:normal;letter-spacing:0.2px">1 个月</div>
<div class="a" style="left:566px;top:336px;font-size:14px;line-height:20px;color:#171a22;font-weight:normal;letter-spacing:0.2px">6 个月</div>
<div class="a" style="left:622px;top:336px;font-size:14px;line-height:20px;color:#171a22;font-weight:normal;letter-spacing:0.2px">1 年</div>
<div class="a" style="left:662px;top:336px;font-size:14px;line-height:20px;color:#171a22;font-weight:normal;letter-spacing:0.2px">2 年</div>
<div class="a" style="left:705px;top:336px;font-size:14px;line-height:20px;color:#171a22;font-weight:normal;letter-spacing:0.2px">全部时间</div>
<div class="blk" style="left:662px;top:358px;width:27px;height:3px;background:#006dca"></div>
<div class="a" style="left:511px;top:382px;font-size:16px;line-height:22px;color:#171a22;font-weight:500;-webkit-text-stroke:0.25px #171a22">自然流量</div>
<div class="a" style="left:585px;top:382px;font-size:16px;line-height:22px;color:#6c6e79;font-weight:normal;letter-spacing:0.8px">1,525/月</div>
<svg style="left:511px;top:425px" width="16" height="16" viewBox="0 0 16 16"><rect x="0" y="0" width="16" height="16" rx="3" fill="#2bb3ff"/><path d="M4.2 8.2 L6.8 10.6 L11.8 5.6" fill="none" stroke="#fff" stroke-width="1.8" stroke-linecap="round" stroke-linejoin="round"/></svg>
<div class="a" style="left:532px;top:424px;font-size:14px;line-height:20px;color:#171a22;font-weight:normal;">自然流量</div>
<svg style="left:603px;top:425px" width="16" height="16" viewBox="0 0 16 16"><rect x="0" y="0" width="16" height="16" rx="3" fill="#ff8c43"/><path d="M4.2 8.2 L6.8 10.6 L11.8 5.6" fill="none" stroke="#fff" stroke-width="1.8" stroke-linecap="round" stroke-linejoin="round"/></svg>
<div class="a" style="left:623px;top:424px;font-size:14px;line-height:20px;color:#171a22;font-weight:normal;">付费流量</div>
<div class="blk" style="left:695px;top:424px;width:1px;height:20px;background:#d1d4db"></div>
<svg style="left:713px;top:426px" width="14" height="15" viewBox="0 0 14 15"><path d="M1 1 H13 V10.5 H5 L2 13.5 V10.5 H1 Z" fill="none" stroke="#171a22" stroke-width="2" stroke-linejoin="miter"/></svg>
<div class="a" style="left:732px;top:424px;font-size:14px;line-height:20px;color:#171a22;font-weight:normal;">备注</div>
<svg style="left:767px;top:431px" width="10" height="6" viewBox="0 0 10 6"><path d="M1 1 L5 5 L9 1" fill="none" stroke="#171a22" stroke-width="2" stroke-linecap="round" stroke-linejoin="round"/></svg>
<svg style="left:0;top:0" width="1534" height="899" viewBox="0 0 1534 899">
<line x1="511" y1="471.5" x2="1505" y2="471.5" stroke="#e6e7ed" stroke-width="1"/>
<line x1="511" y1="501.5" x2="1505" y2="501.5" stroke="#e6e7ed" stroke-width="1"/>
<line x1="511" y1="530.5" x2="1505" y2="530.5" stroke="#e6e7ed" stroke-width="1"/>
<line x1="511" y1="559.5" x2="1505" y2="559.5" stroke="#e6e7ed" stroke-width="1"/>
<line x1="511" y1="589" x2="1505" y2="589" stroke="#e6e7ed" stroke-width="1"/>
<line x1="907" y1="471" x2="907" y2="589" stroke="#d6d8de" stroke-width="2" stroke-dasharray="4,2"/>
<text x="0" y="0" transform="translate(899,562.5) rotate(-90)" font-size="11.4" fill="#6c6e79" font-family="Liberation Sans">SERP 精选结果</text>
<rect x="1500" y="472" width="10" height="117" fill="#e9eced"/>
<rect x="1503.5" y="472" width="2" height="117" fill="#c5cccf"/>
<line x1="511" y1="589" x2="1505" y2="589" stroke="#f1b89a" stroke-width="2.5"/>
<path d="M511.0,589.0 C654.0,588.97 797.0,588.93 940.0,588.80 C955.0,588.79 970.0,587.20 985.0,587.20 C997.0,587.20 1009.0,588.60 1021.0,588.60 C1052.0,588.60 1083.0,587.20 1114.0,587.20 C1129.0,587.20 1144.0,588.60 1159.0,588.60 C1171.0,588.60 1183.0,586.33 1195.0,585.90 C1200.0,585.72 1205.0,585.80 1210.0,585.60 C1220.0,585.20 1230.0,583.47 1240.0,582.90 C1245.0,582.62 1250.0,582.61 1255.0,582.30 C1265.0,581.69 1275.0,579.47 1285.0,579.20 C1290.0,579.07 1295.0,579.00 1300.0,579.00 C1311.0,579.00 1322.0,580.20 1333.0,580.20 C1337.0,580.20 1341.0,578.97 1345.0,576.90 C1351.0,573.79 1357.0,564.20 1363.0,561.00 C1367.0,558.87 1371.0,557.88 1375.0,557.40 C1376.7,557.20 1378.3,557.30 1380.0,557.10 C1382.7,556.78 1385.3,552.52 1388.0,548.00 C1390.7,543.48 1393.3,536.00 1396.0,530.00 C1398.7,524.00 1401.3,516.50 1404.0,512.00 C1406.7,507.50 1409.3,503.87 1412.0,503.00 C1414.7,502.13 1417.3,502.53 1420.0,501.70 C1422.7,500.87 1425.3,499.99 1428.0,498.00 C1431.3,495.51 1434.7,490.67 1438.0,487.00 C1441.3,483.33 1444.7,478.50 1448.0,476.00 C1451.3,473.50 1454.7,472.00 1458.0,472.00 C1462.0,472.00 1466.0,472.13 1470.0,472.40 C1474.7,472.71 1479.3,474.06 1484.0,475.00 C1488.0,475.81 1492.0,477.60 1496.0,477.60 C1499.0,477.60 1502.0,477.60 1505.0,477.60" fill="none" stroke="#4aa6ec" stroke-width="3.2" stroke-linecap="round" stroke-linejoin="round"/>
<line x1="511" y1="588.5" x2="950" y2="588.5" stroke="#7a9cbc" stroke-width="3.2"/>
<text x="1521" y="475.3" font-size="12.5" fill="#6c6e79" font-family="Liberation Sans">1.6K</text>
<text x="1521" y="505.3" font-size="12.5" fill="#6c6e79" font-family="Liberation Sans">1.2K</text>
<text x="1521" y="534.3" font-size="12.5" fill="#6c6e79" font-family="Liberation Sans">800</text>
<text x="1521" y="563.3" font-size="12.5" fill="#6c6e79" font-family="Liberation Sans">400</text>
<text x="1521" y="593.3" font-size="12.5" fill="#6c6e79" font-family="Liberation Sans">0</text>
<defs>
<clipPath id="xc0"><rect x="501" y="590" width="55" height="310"/></clipPath>
<clipPath id="xc1"><rect x="631" y="590" width="55" height="310"/></clipPath>
<clipPath id="xc2"><rect x="761" y="590" width="55" height="310"/></clipPath>
<clipPath id="xc3"><rect x="889" y="590" width="55" height="310"/></clipPath>
<clipPath id="xc4"><rect x="1018" y="590" width="55" height="310"/></clipPath>
<clipPath id="xc5"><rect x="1148" y="590" width="55" height="310"/></clipPath>
<clipPath id="xc6"><rect x="1279" y="590" width="55" height="310"/></clipPath>
<clipPath id="xc7"><rect x="1408" y="590" width="55" height="310"/></clipPath>
</defs>
<text x="502" y="615" font-size="12.5" fill="#6c6e79" font-family="Liberation Sans" clip-path="url(#xc0)">2022年7月</text>
<text x="502" y="892" font-size="12.5" fill="#6c6e79" font-family="Liberation Sans" clip-path="url(#xc0)">2022年7月</text>
<text x="632" y="615" font-size="12.5" fill="#6c6e79" font-family="Liberation Sans" clip-path="url(#xc1)">2022年10</text>
<text x="632" y="892" font-size="12.5" fill="#6c6e79" font-family="Liberation Sans" clip-path="url(#xc1)">2022年10</text>
<text x="762" y="615" font-size="12.5" fill="#6c6e79" font-family="Liberation Sans" clip-path="url(#xc2)">2023年1月</text>
<text x="762" y="892" font-size="12.5" fill="#6c6e79" font-family="Liberation Sans" clip-path="url(#xc2)">2023年1月</text>
<text x="890" y="615" font-size="12.5" fill="#6c6e79" font-family="Liberation Sans" clip-path="url(#xc3)">2023年4月</text>
<text x="890" y="892" font-size="12.5" fill="#6c6e79" font-family="Liberation Sans" clip-path="url(#xc3)">2023年4月</text>
<text x="1019" y="615" font-size="12.5" fill="#6c6e79" font-family="Liberation Sans" clip-path="url(#xc4)">2023年7月</text>
<text x="1019" y="892" font-size="12.5" fill="#6c6e79" font-family="Liberation Sans" clip-path="url(#xc4)">2023年7月</text>
<text x="1149" y="615" font-size="12.5" fill="#6c6e79" font-family="Liberation Sans" clip-path="url(#xc5)">2023年10</text>
<text x="1149" y="892" font-size="12.5" fill="#6c6e79" font-family="Liberation Sans" clip-path="url(#xc5)">2023年10</text>
<text x="1280" y="615" font-size="12.5" fill="#6c6e79" font-family="Liberation Sans" clip-path="url(#xc6)">2024年1月</text>
<text x="1280" y="892" font-size="12.5" fill="#6c6e79" font-family="Liberation Sans" clip-path="url(#xc6)">2024年1月</text>
<text x="1409" y="615" font-size="12.5" fill="#6c6e79" font-family="Liberation Sans" clip-path="url(#xc7)">2024年4月</text>
<text x="1409" y="892" font-size="12.5" fill="#6c6e79" font-family="Liberation Sans" clip-path="url(#xc7)">2024年4月</text>
<line x1="511" y1="749.5" x2="1505" y2="749.5" stroke="#e6e7ed" stroke-width="1"/>
<line x1="511" y1="778.5" x2="1505" y2="778.5" stroke="#e6e7ed" stroke-width="1"/>
<line x1="511" y1="807.5" x2="1505" y2="807.5" stroke="#e6e7ed" stroke-width="1"/>
<line x1="511" y1="836.5" x2="1505" y2="836.5" stroke="#e6e7ed" stroke-width="1"/>
<line x1="511" y1="865.5" x2="1505" y2="865.5" stroke="#e6e7ed" stroke-width="1"/>
<line x1="907" y1="749" x2="907" y2="865" stroke="#d6d8de" stroke-width="2" stroke-dasharray="4,2"/>
<rect x="1500" y="749" width="10" height="117" fill="#e9eced"/>
<rect x="1503.5" y="749" width="2" height="117" fill="#c5cccf"/>
<text x="1521" y="753.3" font-size="12.5" fill="#6c6e79" font-family="Liberation Sans">1.5K</text>
<text x="1521" y="782.3" font-size="12.5" fill="#6c6e79" font-family="Liberation Sans">1.1K</text>
<text x="1521" y="811.3" font-size="12.5" fill="#6c6e79" font-family="Liberation Sans">760</text>
<text x="1521" y="840.3" font-size="12.5" fill="#6c6e79" font-family="Liberation Sans">380</text>
<text x="1521" y="869.3" font-size="12.5" fill="#6c6e79" font-family="Liberation Sans">0</text>
<path d="M511.0,866.3 C554.0,866.30 597.0,866.30 640.0,866.30 C660.0,866.30 680.0,864.20 700.0,864.20 C720.0,864.20 740.0,866.30 760.0,866.30 C836.7,866.30 913.3,866.30 990.0,866.30 C1003.3,866.30 1016.7,863.91 1030.0,863.40 C1044.0,862.87 1058.0,862.78 1072.0,862.60 C1084.7,862.43 1097.3,862.44 1110.0,862.30 C1124.9,862.13 1139.9,862.07 1154.8,861.60 C1159.3,861.46 1163.9,860.64 1168.4,859.50 C1175.3,857.77 1182.1,853.11 1189.0,851.30 C1195.8,849.50 1202.7,850.40 1209.5,848.60 C1216.3,846.80 1223.2,837.54 1230.0,834.90 C1234.6,833.14 1239.1,833.00 1243.7,832.20 C1248.3,831.40 1252.8,831.01 1257.4,830.10 C1264.3,828.74 1271.1,825.85 1278.0,824.60 C1284.8,823.36 1291.7,823.61 1298.5,822.60 C1306.3,821.45 1314.0,818.74 1321.8,817.80 C1330.1,816.80 1338.4,816.80 1346.7,816.30 C1357.1,815.67 1367.4,815.67 1377.8,814.40 C1380.9,814.02 1384.1,812.82 1387.2,810.80 C1394.5,806.12 1401.7,785.74 1409.0,783.60 C1414.2,782.07 1419.4,782.83 1424.6,781.30 C1427.2,780.54 1429.7,779.66 1432.3,778.10 C1438.0,774.61 1443.8,762.08 1449.5,760.20 C1454.2,758.67 1458.8,758.79 1463.5,757.90 C1467.1,757.21 1470.8,756.52 1474.4,755.60 C1480.1,754.15 1485.8,751.26 1491.5,750.10 C1496.0,749.18 1500.5,748.89 1505.0,748.60 L1505,865.5 L511,865.5 Z" fill="#d7edfd"/>
<path d="M511.0,866.3 C670.7,866.30 830.3,866.30 990.0,866.30 C1003.3,866.30 1016.7,864.28 1030.0,864.20 C1053.3,864.07 1076.7,864.13 1100.0,864.00 C1122.8,863.87 1145.6,863.67 1168.4,863.00 C1175.3,862.80 1182.1,859.47 1189.0,858.20 C1195.8,856.94 1202.7,857.12 1209.5,855.40 C1216.3,853.68 1223.2,848.83 1230.0,847.90 C1236.9,846.97 1243.7,847.27 1250.6,846.50 C1259.7,845.47 1268.9,842.30 1278.0,841.80 C1285.3,841.40 1292.7,841.47 1300.0,841.20 C1314.0,840.69 1328.0,840.43 1342.0,838.90 C1351.3,837.88 1360.7,835.34 1370.0,834.20 C1375.7,833.51 1381.3,833.67 1387.0,832.60 C1394.3,831.22 1401.7,822.88 1409.0,821.00 C1415.2,819.40 1421.5,820.20 1427.7,818.60 C1435.0,816.73 1442.2,807.02 1449.5,805.40 C1456.7,803.80 1463.8,804.08 1471.0,803.00 C1478.9,801.81 1486.7,798.40 1494.6,798.40 C1498.1,798.40 1501.5,798.40 1505.0,798.40 L1505,865.5 L511,865.5 Z" fill="#e8f4fd"/>
<path d="M511.0,865.9 C725.7,865.87 940.3,865.83 1155.0,865.70 C1168.6,865.69 1182.2,863.40 1195.8,863.40 C1209.5,863.40 1223.3,864.30 1237.0,864.30 C1250.7,864.30 1264.3,863.40 1278.0,863.40 C1285.3,863.40 1292.7,863.64 1300.0,863.80 C1309.3,864.00 1318.7,864.50 1328.0,864.50 C1333.2,864.50 1338.4,864.24 1343.6,863.80 C1350.9,863.18 1358.1,861.48 1365.4,860.70 C1372.7,859.92 1379.9,860.15 1387.2,859.10 C1394.5,858.05 1401.7,855.59 1409.0,854.40 C1415.7,853.31 1422.3,853.11 1429.0,852.10 C1435.8,851.06 1442.7,848.91 1449.5,848.20 C1454.7,847.67 1459.8,847.40 1465.0,847.40 C1478.3,847.40 1491.7,847.80 1505.0,848.20 L1505,865.5 L511,865.5 Z" fill="#def0d6"/>
<path d="M511.0,866.3 C670.7,866.30 830.3,866.30 990.0,866.30 C1003.3,866.30 1016.7,864.28 1030.0,864.20 C1053.3,864.07 1076.7,864.13 1100.0,864.00 C1122.8,863.87 1145.6,863.67 1168.4,863.00 C1175.3,862.80 1182.1,859.47 1189.0,858.20 C1195.8,856.94 1202.7,857.12 1209.5,855.40 C1216.3,853.68 1223.2,848.83 1230.0,847.90 C1236.9,846.97 1243.7,847.27 1250.6,846.50 C1259.7,845.47 1268.9,842.30 1278.0,841.80 C1285.3,841.40 1292.7,841.47 1300.0,841.20 C1314.0,840.69 1328.0,840.43 1342.0,838.90 C1351.3,837.88 1360.7,835.34 1370.0,834.20 C1375.7,833.51 1381.3,833.67 1387.0,832.60 C1394.3,831.22 1401.7,822.88 1409.0,821.00 C1415.2,819.40 1421.5,820.20 1427.7,818.60 C1435.0,816.73 1442.2,807.02 1449.5,805.40 C1456.7,803.80 1463.8,804.08 1471.0,803.00 C1478.9,801.81 1486.7,798.40 1494.6,798.40 C1498.1,798.40 1501.5,798.40 1505.0,798.40" fill="none" stroke="#8fd0ff" stroke-width="3"/>
<path d="M511.0,866.3 C670.7,866.30 830.3,866.30 990.0,866.30 C1003.3,866.30 1016.7,863.95 1030.0,863.80 C1053.3,863.53 1076.7,863.55 1100.0,863.40 C1118.3,863.28 1136.5,863.27 1154.8,863.00 C1159.3,862.93 1163.9,862.39 1168.4,861.50 C1175.3,860.16 1182.1,856.30 1189.0,854.80 C1195.8,853.31 1202.7,854.03 1209.5,852.50 C1216.3,850.97 1223.2,842.35 1230.0,840.40 C1239.1,837.80 1248.3,838.20 1257.4,836.50 C1264.3,835.22 1271.1,833.03 1278.0,832.00 C1285.3,830.90 1292.7,830.88 1300.0,830.30 C1315.6,829.07 1331.1,827.85 1346.7,826.40 C1357.1,825.43 1367.4,825.37 1377.8,823.30 C1380.9,822.68 1384.1,821.74 1387.2,820.00 C1394.5,815.97 1401.7,799.74 1409.0,797.60 C1414.2,796.07 1419.4,796.83 1424.6,795.30 C1432.9,792.85 1441.2,776.43 1449.5,774.30 C1457.8,772.17 1466.1,772.54 1474.4,771.10 C1484.6,769.33 1494.8,766.72 1505.0,764.10" fill="none" stroke="#fff" stroke-width="4.5"/>
<path d="M511.0,866.3 C670.7,866.30 830.3,866.30 990.0,866.30 C1003.3,866.30 1016.7,863.95 1030.0,863.80 C1053.3,863.53 1076.7,863.55 1100.0,863.40 C1118.3,863.28 1136.5,863.27 1154.8,863.00 C1159.3,862.93 1163.9,862.39 1168.4,861.50 C1175.3,860.16 1182.1,856.30 1189.0,854.80 C1195.8,853.31 1202.7,854.03 1209.5,852.50 C1216.3,850.97 1223.2,842.35 1230.0,840.40 C1239.1,837.80 1248.3,838.20 1257.4,836.50 C1264.3,835.22 1271.1,833.03 1278.0,832.00 C1285.3,830.90 1292.7,830.88 1300.0,830.30 C1315.6,829.07 1331.1,827.85 1346.7,826.40 C1357.1,825.43 1367.4,825.37 1377.8,823.30 C1380.9,822.68 1384.1,821.74 1387.2,820.00 C1394.5,815.97 1401.7,799.74 1409.0,797.60 C1414.2,796.07 1419.4,796.83 1424.6,795.30 C1432.9,792.85 1441.2,776.43 1449.5,774.30 C1457.8,772.17 1466.1,772.54 1474.4,771.10 C1484.6,769.33 1494.8,766.72 1505.0,764.10" fill="none" stroke="#2bb3ff" stroke-width="3"/>
<path d="M511.0,866.3 C554.0,866.30 597.0,866.30 640.0,866.30 C660.0,866.30 680.0,864.79 700.0,864.79 C720.0,864.79 740.0,866.30 760.0,866.30 C836.7,866.30 913.3,866.30 990.0,866.30 C1003.3,866.30 1016.7,864.62 1030.0,864.35 C1044.0,864.05 1058.0,864.01 1072.0,863.90 C1084.7,863.81 1097.3,863.82 1110.0,863.74 C1124.9,863.65 1139.9,863.61 1154.8,863.36 C1159.3,863.28 1163.9,862.86 1168.4,862.20 C1175.3,861.20 1182.1,858.57 1189.0,857.30 C1195.8,856.04 1202.7,856.40 1209.5,854.60 C1216.3,852.80 1223.2,843.54 1230.0,840.90 C1234.6,839.14 1239.1,839.00 1243.7,838.20 C1248.3,837.40 1252.8,837.01 1257.4,836.10 C1264.3,834.74 1271.1,831.85 1278.0,830.60 C1284.8,829.36 1291.7,829.61 1298.5,828.60 C1306.3,827.45 1314.0,824.74 1321.8,823.80 C1330.1,822.80 1338.4,822.80 1346.7,822.30 C1357.1,821.67 1367.4,821.67 1377.8,820.40 C1380.9,820.02 1384.1,818.82 1387.2,816.80 C1394.5,812.12 1401.7,791.74 1409.0,789.60 C1414.2,788.07 1419.4,788.83 1424.6,787.30 C1427.2,786.54 1429.7,785.66 1432.3,784.10 C1438.0,780.61 1443.8,768.08 1449.5,766.20 C1454.2,764.67 1458.8,764.79 1463.5,763.90 C1467.1,763.21 1470.8,762.52 1474.4,761.60 C1480.1,760.15 1485.8,757.26 1491.5,756.10 C1496.0,755.18 1500.5,754.89 1505.0,754.60" fill="none" stroke="#fff" stroke-width="4.5"/>
<path d="M511.0,866.3 C554.0,866.30 597.0,866.30 640.0,866.30 C660.0,866.30 680.0,864.79 700.0,864.79 C720.0,864.79 740.0,866.30 760.0,866.30 C836.7,866.30 913.3,866.30 990.0,866.30 C1003.3,866.30 1016.7,864.62 1030.0,864.35 C1044.0,864.05 1058.0,864.01 1072.0,863.90 C1084.7,863.81 1097.3,863.82 1110.0,863.74 C1124.9,863.65 1139.9,863.61 1154.8,863.36 C1159.3,863.28 1163.9,862.86 1168.4,862.20 C1175.3,861.20 1182.1,858.57 1189.0,857.30 C1195.8,856.04 1202.7,856.40 1209.5,854.60 C1216.3,852.80 1223.2,843.54 1230.0,840.90 C1234.6,839.14 1239.1,839.00 1243.7,838.20 C1248.3,837.40 1252.8,837.01 1257.4,836.10 C1264.3,834.74 1271.1,831.85 1278.0,830.60 C1284.8,829.36 1291.7,829.61 1298.5,828.60 C1306.3,827.45 1314.0,824.74 1321.8,823.80 C1330.1,822.80 1338.4,822.80 1346.7,822.30 C1357.1,821.67 1367.4,821.67 1377.8,820.40 C1380.9,820.02 1384.1,818.82 1387.2,816.80 C1394.5,812.12 1401.7,791.74 1409.0,789.60 C1414.2,788.07 1419.4,788.83 1424.6,787.30 C1427.2,786.54 1429.7,785.66 1432.3,784.10 C1438.0,780.61 1443.8,768.08 1449.5,766.20 C1454.2,764.67 1458.8,764.79 1463.5,763.90 C1467.1,763.21 1470.8,762.52 1474.4,761.60 C1480.1,760.15 1485.8,757.26 1491.5,756.10 C1496.0,755.18 1500.5,754.89 1505.0,754.60" fill="none" stroke="#1a8cf5" stroke-width="3"/>
<path d="M511.0,866.3 C554.0,866.30 597.0,866.30 640.0,866.30 C660.0,866.30 680.0,864.79 700.0,864.79 C720.0,864.79 740.0,866.30 760.0,866.30 C836.7,866.30 913.3,866.30 990.0,866.30 C1003.3,866.30 1016.7,864.62 1030.0,864.35 C1044.0,864.05 1058.0,864.01 1072.0,863.90 C1084.7,863.81 1097.3,863.82 1110.0,863.74 C1124.9,863.65 1139.9,863.61 1154.8,863.36 C1159.3,863.28 1163.9,862.75 1168.4,861.70 C1175.3,860.11 1182.1,855.31 1189.0,853.50 C1195.8,851.70 1202.7,852.60 1209.5,850.80 C1216.3,849.00 1223.2,839.74 1230.0,837.10 C1234.6,835.34 1239.1,835.20 1243.7,834.40 C1248.3,833.60 1252.8,833.21 1257.4,832.30 C1264.3,830.94 1271.1,828.05 1278.0,826.80 C1284.8,825.56 1291.7,825.81 1298.5,824.80 C1306.3,823.65 1314.0,820.94 1321.8,820.00 C1330.1,819.00 1338.4,819.00 1346.7,818.50 C1357.1,817.87 1367.4,817.87 1377.8,816.60 C1380.9,816.22 1384.1,815.02 1387.2,813.00 C1394.5,808.32 1401.7,787.94 1409.0,785.80 C1414.2,784.27 1419.4,785.03 1424.6,783.50 C1427.2,782.74 1429.7,781.86 1432.3,780.30 C1438.0,776.81 1443.8,764.28 1449.5,762.40 C1454.2,760.87 1458.8,760.99 1463.5,760.10 C1467.1,759.41 1470.8,758.72 1474.4,757.80 C1480.1,756.35 1485.8,753.46 1491.5,752.30 C1496.0,751.38 1500.5,751.09 1505.0,750.80" fill="none" stroke="#0a64c8" stroke-width="3.5"/>
<path d="M511.0,866.3 C554.0,866.30 597.0,866.30 640.0,866.30 C660.0,866.30 680.0,864.20 700.0,864.20 C720.0,864.20 740.0,866.30 760.0,866.30 C836.7,866.30 913.3,866.30 990.0,866.30 C1003.3,866.30 1016.7,863.91 1030.0,863.40 C1044.0,862.87 1058.0,862.78 1072.0,862.60 C1084.7,862.43 1097.3,862.44 1110.0,862.30 C1124.9,862.13 1139.9,862.07 1154.8,861.60 C1159.3,861.46 1163.9,860.64 1168.4,859.50 C1175.3,857.77 1182.1,853.11 1189.0,851.30 C1195.8,849.50 1202.7,850.40 1209.5,848.60 C1216.3,846.80 1223.2,837.54 1230.0,834.90 C1234.6,833.14 1239.1,833.00 1243.7,832.20 C1248.3,831.40 1252.8,831.01 1257.4,830.10 C1264.3,828.74 1271.1,825.85 1278.0,824.60 C1284.8,823.36 1291.7,823.61 1298.5,822.60 C1306.3,821.45 1314.0,818.74 1321.8,817.80 C1330.1,816.80 1338.4,816.80 1346.7,816.30 C1357.1,815.67 1367.4,815.67 1377.8,814.40 C1380.9,814.02 1384.1,812.82 1387.2,810.80 C1394.5,806.12 1401.7,785.74 1409.0,783.60 C1414.2,782.07 1419.4,782.83 1424.6,781.30 C1427.2,780.54 1429.7,779.66 1432.3,778.10 C1438.0,774.61 1443.8,762.08 1449.5,760.20 C1454.2,758.67 1458.8,758.79 1463.5,757.90 C1467.1,757.21 1470.8,756.52 1474.4,755.60 C1480.1,754.15 1485.8,751.26 1491.5,750.10 C1496.0,749.18 1500.5,748.89 1505.0,748.60" fill="none" stroke="#f5b73b" stroke-width="1.3"/>
<path d="M511.0,865.9 C725.7,865.87 940.3,865.83 1155.0,865.70 C1168.6,865.69 1182.2,863.40 1195.8,863.40 C1209.5,863.40 1223.3,864.30 1237.0,864.30 C1250.7,864.30 1264.3,863.40 1278.0,863.40 C1285.3,863.40 1292.7,863.64 1300.0,863.80 C1309.3,864.00 1318.7,864.50 1328.0,864.50 C1333.2,864.50 1338.4,864.24 1343.6,863.80 C1350.9,863.18 1358.1,861.48 1365.4,860.70 C1372.7,859.92 1379.9,860.15 1387.2,859.10 C1394.5,858.05 1401.7,855.59 1409.0,854.40 C1415.7,853.31 1422.3,853.11 1429.0,852.10 C1435.8,851.06 1442.7,848.91 1449.5,848.20 C1454.7,847.67 1459.8,847.40 1465.0,847.40 C1478.3,847.40 1491.7,847.80 1505.0,848.20" fill="none" stroke="#5fba33" stroke-width="3.6"/>
<path d="M506.5,860.5 H516.5 V868.5 H509.0 L506.5,871.0 Z" fill="#e8282b"/>
<path d="M549.5,860.5 H559.5 V868.5 H552.0 L549.5,871.0 Z" fill="#e8282b"/>
<path d="M636.5,860.5 H646.5 V868.5 H639.0 L636.5,871.0 Z" fill="#e8282b"/>
<path d="M766.5,860.5 H776.5 V868.5 H769.0 L766.5,871.0 Z" fill="#e8282b"/>
<path d="M894.5,860.5 H904.5 V868.5 H897.0 L894.5,871.0 Z" fill="#e8282b"/>
<path d="M937.5,860.5 H947.5 V868.5 H940.0 L937.5,871.0 Z" fill="#e8282b"/>
<path d="M981.5,860.5 H991.5 V868.5 H984.0 L981.5,871.0 Z" fill="#e8282b"/>
<path d="M1024.5,860.5 H1034.5 V868.5 H1027.0 L1024.5,871.0 Z" fill="#e8282b"/>
<path d="M1240.5,860.5 H1250.5 V868.5 H1243.0 L1240.5,871.0 Z" fill="#e8282b"/>
<path d="M1285.5,860.5 H1295.5 V868.5 H1288.0 L1285.5,871.0 Z" fill="#e8282b"/>
<path d="M1329.5,860.5 H1339.5 V868.5 H1332.0 L1329.5,871.0 Z" fill="#e8282b"/>
<path d="M1413.5,860.5 H1423.5 V868.5 H1416.0 L1413.5,871.0 Z" fill="#e8282b"/>
<path d="M1456.5,860.5 H1466.5 V868.5 H1459.0 L1456.5,871.0 Z" fill="#e8282b"/>
<path d="M1500.5,860.5 H1510.5 V868.5 H1503.0 L1500.5,871.0 Z" fill="#e8282b"/>
<circle cx="598.5" cy="866.0" r="6.2" fill="#fff"/>
<path d="M601.8,863.1 A4.2,4.2 0 0 0 594.6,864.5" fill="none" stroke="#ea4335" stroke-width="2.1"/>
<path d="M594.6,864.5 A4.2,4.2 0 0 0 594.6,867.5" fill="none" stroke="#fbbc05" stroke-width="2.1"/>
<path d="M594.6,867.5 A4.2,4.2 0 0 0 601.8,868.6" fill="none" stroke="#34a853" stroke-width="2.1"/>
<path d="M601.8,868.6 A4.2,4.2 0 0 0 602.7,866.0" fill="none" stroke="#4285f4" stroke-width="2.1"/>
<path d="M603.7,866.0 H598.8" fill="none" stroke="#4285f4" stroke-width="2"/>
<circle cx="685.5" cy="866.0" r="6.2" fill="#fff"/>
<path d="M688.8,863.1 A4.2,4.2 0 0 0 681.6,864.5" fill="none" stroke="#ea4335" stroke-width="2.1"/>
<path d="M681.6,864.5 A4.2,4.2 0 0 0 681.6,867.5" fill="none" stroke="#fbbc05" stroke-width="2.1"/>
<path d="M681.6,867.5 A4.2,4.2 0 0 0 688.8,868.6" fill="none" stroke="#34a853" stroke-width="2.1"/>
<path d="M688.8,868.6 A4.2,4.2 0 0 0 689.7,866.0" fill="none" stroke="#4285f4" stroke-width="2.1"/>
<path d="M690.7,866.0 H685.8" fill="none" stroke="#4285f4" stroke-width="2"/>
<circle cx="727.5" cy="866.0" r="6.2" fill="#fff"/>
<path d="M730.8,863.1 A4.2,4.2 0 0 0 723.6,864.5" fill="none" stroke="#ea4335" stroke-width="2.1"/>
<path d="M723.6,864.5 A4.2,4.2 0 0 0 723.6,867.5" fill="none" stroke="#fbbc05" stroke-width="2.1"/>
<path d="M723.6,867.5 A4.2,4.2 0 0 0 730.8,868.6" fill="none" stroke="#34a853" stroke-width="2.1"/>
<path d="M730.8,868.6 A4.2,4.2 0 0 0 731.7,866.0" fill="none" stroke="#4285f4" stroke-width="2.1"/>
<path d="M732.7,866.0 H727.8" fill="none" stroke="#4285f4" stroke-width="2"/>
<circle cx="815.5" cy="866.0" r="6.2" fill="#fff"/>
<path d="M818.8,863.1 A4.2,4.2 0 0 0 811.6,864.5" fill="none" stroke="#ea4335" stroke-width="2.1"/>
<path d="M811.6,864.5 A4.2,4.2 0 0 0 811.6,867.5" fill="none" stroke="#fbbc05" stroke-width="2.1"/>
<path d="M811.6,867.5 A4.2,4.2 0 0 0 818.8,868.6" fill="none" stroke="#34a853" stroke-width="2.1"/>
<path d="M818.8,868.6 A4.2,4.2 0 0 0 819.7,866.0" fill="none" stroke="#4285f4" stroke-width="2.1"/>
<path d="M820.7,866.0 H815.8" fill="none" stroke="#4285f4" stroke-width="2"/>
<circle cx="855.5" cy="866.0" r="6.2" fill="#fff"/>
<path d="M858.8,863.1 A4.2,4.2 0 0 0 851.6,864.5" fill="none" stroke="#ea4335" stroke-width="2.1"/>
<path d="M851.6,864.5 A4.2,4.2 0 0 0 851.6,867.5" fill="none" stroke="#fbbc05" stroke-width="2.1"/>
<path d="M851.6,867.5 A4.2,4.2 0 0 0 858.8,868.6" fill="none" stroke="#34a853" stroke-width="2.1"/>
<path d="M858.8,868.6 A4.2,4.2 0 0 0 859.7,866.0" fill="none" stroke="#4285f4" stroke-width="2.1"/>
<path d="M860.7,866.0 H855.8" fill="none" stroke="#4285f4" stroke-width="2"/>
<circle cx="1072.5" cy="866.0" r="6.2" fill="#fff"/>
<path d="M1075.8,863.1 A4.2,4.2 0 0 0 1068.6,864.5" fill="none" stroke="#ea4335" stroke-width="2.1"/>
<path d="M1068.6,864.5 A4.2,4.2 0 0 0 1068.6,867.5" fill="none" stroke="#fbbc05" stroke-width="2.1"/>
<path d="M1068.6,867.5 A4.2,4.2 0 0 0 1075.8,868.6" fill="none" stroke="#34a853" stroke-width="2.1"/>
<path d="M1075.8,868.6 A4.2,4.2 0 0 0 1076.7,866.0" fill="none" stroke="#4285f4" stroke-width="2.1"/>
<path d="M1077.7,866.0 H1072.8" fill="none" stroke="#4285f4" stroke-width="2"/>
<circle cx="1116.5" cy="866.0" r="6.2" fill="#fff"/>
<path d="M1119.8,863.1 A4.2,4.2 0 0 0 1112.6,864.5" fill="none" stroke="#ea4335" stroke-width="2.1"/>
<path d="M1112.6,864.5 A4.2,4.2 0 0 0 1112.6,867.5" fill="none" stroke="#fbbc05" stroke-width="2.1"/>
<path d="M1112.6,867.5 A4.2,4.2 0 0 0 1119.8,868.6" fill="none" stroke="#34a853" stroke-width="2.1"/>
<path d="M1119.8,868.6 A4.2,4.2 0 0 0 1120.7,866.0" fill="none" stroke="#4285f4" stroke-width="2.1"/>
<path d="M1121.7,866.0 H1116.8" fill="none" stroke="#4285f4" stroke-width="2"/>
<circle cx="1159.5" cy="866.0" r="6.2" fill="#fff"/>
<path d="M1162.8,863.1 A4.2,4.2 0 0 0 1155.6,864.5" fill="none" stroke="#ea4335" stroke-width="2.1"/>
<path d="M1155.6,864.5 A4.2,4.2 0 0 0 1155.6,867.5" fill="none" stroke="#fbbc05" stroke-width="2.1"/>
<path d="M1155.6,867.5 A4.2,4.2 0 0 0 1162.8,868.6" fill="none" stroke="#34a853" stroke-width="2.1"/>
<path d="M1162.8,868.6 A4.2,4.2 0 0 0 1163.7,866.0" fill="none" stroke="#4285f4" stroke-width="2.1"/>
<path d="M1164.7,866.0 H1159.8" fill="none" stroke="#4285f4" stroke-width="2"/>
<circle cx="1202.5" cy="866.0" r="6.2" fill="#fff"/>
<path d="M1205.8,863.1 A4.2,4.2 0 0 0 1198.6,864.5" fill="none" stroke="#ea4335" stroke-width="2.1"/>
<path d="M1198.6,864.5 A4.2,4.2 0 0 0 1198.6,867.5" fill="none" stroke="#fbbc05" stroke-width="2.1"/>
<path d="M1198.6,867.5 A4.2,4.2 0 0 0 1205.8,868.6" fill="none" stroke="#34a853" stroke-width="2.1"/>
<path d="M1205.8,868.6 A4.2,4.2 0 0 0 1206.7,866.0" fill="none" stroke="#4285f4" stroke-width="2.1"/>
<path d="M1207.7,866.0 H1202.8" fill="none" stroke="#4285f4" stroke-width="2"/>
<circle cx="1374.5" cy="866.0" r="6.2" fill="#fff"/>
<path d="M1377.8,863.1 A4.2,4.2 0 0 0 1370.6,864.5" fill="none" stroke="#ea4335" stroke-width="2.1"/>
<path d="M1370.6,864.5 A4.2,4.2 0 0 0 1370.6,867.5" fill="none" stroke="#fbbc05" stroke-width="2.1"/>
<path d="M1370.6,867.5 A4.2,4.2 0 0 0 1377.8,868.6" fill="none" stroke="#34a853" stroke-width="2.1"/>
<path d="M1377.8,868.6 A4.2,4.2 0 0 0 1378.7,866.0" fill="none" stroke="#4285f4" stroke-width="2.1"/>
<path d="M1379.7,866.0 H1374.8" fill="none" stroke="#4285f4" stroke-width="2"/>
</svg>
<div class="a" style="left:511px;top:658px;font-size:16px;line-height:22px;color:#171a22;font-weight:500;-webkit-text-stroke:0.25px #171a22">自然搜索关键词</div>
<div class="a" style="left:632px;top:658px;font-size:16px;line-height:22px;color:#6c6e79;font-weight:normal;letter-spacing:0.9px">1,515</div>
<svg style="left:511px;top:703px" width="16" height="16" viewBox="0 0 16 16"><rect x="0" y="0" width="16" height="16" rx="3" fill="#ffc12d"/><path d="M4.2 8.2 L6.8 10.6 L11.8 5.6" fill="none" stroke="#fff" stroke-width="1.8" stroke-linecap="round" stroke-linejoin="round"/></svg>
<div class="a" style="left:531px;top:701px;font-size:14px;line-height:20px;color:#171a22;font-weight:normal;letter-spacing:0.2px">排名前 3 名</div>
<svg style="left:621px;top:703px" width="16" height="16" viewBox="0 0 16 16"><rect x="0" y="0" width="16" height="16" rx="3" fill="#0a5cba"/><path d="M4.2 8.2 L6.8 10.6 L11.8 5.6" fill="none" stroke="#fff" stroke-width="1.8" stroke-linecap="round" stroke-linejoin="round"/></svg>
<div class="a" style="left:640px;top:701px;font-size:14px;line-height:20px;color:#171a22;font-weight:normal;letter-spacing:0.2px">第 4-10 名</div>
<svg style="left:722px;top:703px" width="16" height="16" viewBox="0 0 16 16"><rect x="0" y="0" width="16" height="16" rx="3" fill="#1c8fff"/><path d="M4.2 8.2 L6.8 10.6 L11.8 5.6" fill="none" stroke="#fff" stroke-width="1.8" stroke-linecap="round" stroke-linejoin="round"/></svg>
<div class="a" style="left:742px;top:701px;font-size:14px;line-height:20px;color:#171a22;font-weight:normal;letter-spacing:0.2px">第 11-20 名</div>
<svg style="left:830px;top:703px" width="16" height="16" viewBox="0 0 16 16"><rect x="0" y="0" width="16" height="16" rx="3" fill="#2bb3ff"/><path d="M4.2 8.2 L6.8 10.6 L11.8 5.6" fill="none" stroke="#fff" stroke-width="1.8" stroke-linecap="round" stroke-linejoin="round"/></svg>
<div class="a" style="left:850px;top:701px;font-size:14px;line-height:20px;color:#171a22;font-weight:normal;letter-spacing:0.2px">第 21-50 名</div>
<svg style="left:940px;top:703px" width="16" height="16" viewBox="0 0 16 16"><rect x="0" y="0" width="16" height="16" rx="3" fill="#91d4ff"/><path d="M4.2 8.2 L6.8 10.6 L11.8 5.6" fill="none" stroke="#fff" stroke-width="1.8" stroke-linecap="round" stroke-linejoin="round"/></svg>
<div class="a" style="left:961px;top:701px;font-size:14px;line-height:20px;color:#171a22;font-weight:normal;letter-spacing:0.2px">第 51-100 名</div>
<svg style="left:1058px;top:703px" width="16" height="16" viewBox="0 0 16 16"><rect x="0" y="0" width="16" height="16" rx="3" fill="#59c13f"/><path d="M4.2 8.2 L6.8 10.6 L11.8 5.6" fill="none" stroke="#fff" stroke-width="1.8" stroke-linecap="round" stroke-linejoin="round"/></svg>
<div class="a" style="left:1079px;top:701px;font-size:14px;line-height:20px;color:#171a22;font-weight:normal;letter-spacing:0.2px">SERP 精选结果</div>
</body></html>
